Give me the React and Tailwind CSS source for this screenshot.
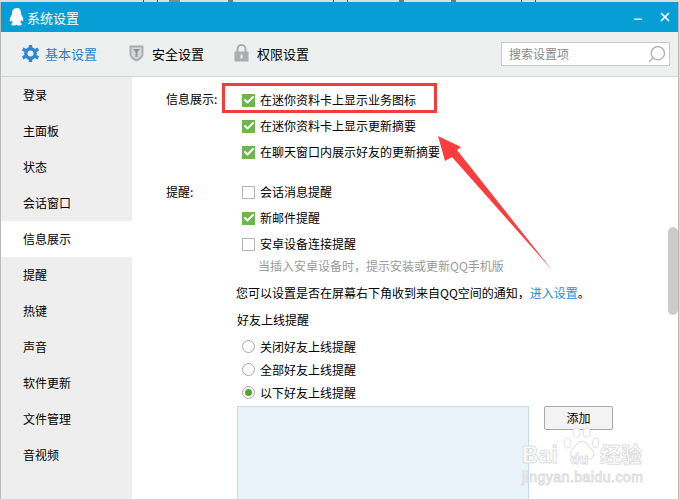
import { Check, Minus, Search, X } from "lucide-react";

const menu = ["登录", "主面板", "状态", "会话窗口", "信息展示", "提醒", "热键", "声音", "软件更新", "文件管理", "音视频"];

const CheckRow = ({ label, checked }) => (
  <div className="flex items-center h-[26px]">
    {checked ? (
      <span className="w-[13px] h-[13px] bg-[#6cb64c] flex items-center justify-center">
        <Check className="w-[12px] h-[12px] text-white" strokeWidth={4} />
      </span>
    ) : (
      <span className="w-[13px] h-[13px] bg-white border border-[#b5b5b5]"></span>
    )}
    <span className="ml-[5px]">{label}</span>
  </div>
);

const RadioRow = ({ label, checked }) => (
  <div className="flex items-center h-[23px] ml-[5px]">
    <span className="w-[13px] h-[13px] rounded-full bg-white border border-[#a8a8a8] flex items-center justify-center">
      {checked && <span className="w-[7px] h-[7px] rounded-full bg-[#52a62c]"></span>}
    </span>
    <span className="ml-[5px]">{label}</span>
  </div>
);

const QqLogo = () => (
  <svg width="15" height="18" viewBox="0 0 15 18" fill="#fff">
    <path d="M7.5 0C4.6 0 3 2.2 3 5c0 .8-.1 1.4-.4 2C1.5 9 .7 10.8.7 12.3c0 .9.3 1.3.6 1.3.4 0 .9-.5 1.3-1.2.2.9.7 1.7 1.3 2.3-1 .4-1.7.9-1.7 1.5C2.2 17 3.5 17.5 5 17.5c1.1 0 2-.3 2.5-.8.5.5 1.4.8 2.5.8 1.5 0 2.8-.5 2.8-1.6 0-.6-.7-1.1-1.7-1.5.6-.6 1.1-1.4 1.3-2.3.4.7.9 1.2 1.3 1.2.3 0 .6-.4.6-1.3 0-1.5-.8-3.3-1.9-5.3-.3-.6-.4-1.2-.4-2 0-2.8-1.6-5-4.5-5z" />
  </svg>
);

const GearIcon = () => (
  <svg width="17" height="17" viewBox="0 0 17 17">
    <circle cx="8.5" cy="8.5" r="4.7" fill="none" stroke="#2f86d0" strokeWidth="3.4" />
    <path d="M8.5 0v3M8.5 14v3M0.7 4l2.6 1.5M13.7 11.5l2.6 1.5M0.7 13l2.6-1.5M13.7 5.5l2.6-1.5" stroke="#2f86d0" strokeWidth="3.4" />
  </svg>
);

const ShieldIcon = () => (
  <svg width="15" height="17" viewBox="0 0 15 17">
    <path d="M0.5 0.5h14v8.5c0 3.5-3.5 6-7 7.5-3.5-1.5-7-4-7-7.5z" fill="#a9aeae" />
    <path d="M2.5 2.5h10v6.5c0 2.3-2.5 4.2-5 5.3-2.5-1.1-5-3-5-5.3z" fill="#d6d9d9" />
    <path d="M4 4h7l-2.5 3v5h-2V7z" fill="#8d9393" />
  </svg>
);

const LockIcon = () => (
  <svg width="15" height="18" viewBox="0 0 15 18">
    <path d="M3.5 8V5a4 4 0 0 1 8 0v3" fill="none" stroke="#a9aeae" strokeWidth="2" />
    <rect x="0.5" y="7.5" width="14" height="10" fill="#a9aeae" />
    <rect x="6.5" y="10.5" width="2" height="4" fill="#eef0f0" />
  </svg>
);

const Paw = () => (
  <svg width="40" height="40" viewBox="0 0 50 50" fill="#fff" stroke="#e4e4e4" strokeWidth="1.5">
    <ellipse cx="7" cy="20" rx="4" ry="6" />
    <ellipse cx="18" cy="7" rx="4.5" ry="6" />
    <ellipse cx="31" cy="7" rx="4.5" ry="6" />
    <ellipse cx="42" cy="20" rx="4" ry="6" />
    <path d="M25 18c-6 0-8 6-12 10-5 5-2 13 5 12 3-.5 5-1 7-1s4 .5 7 1c7 1 10-7 5-12-4-4-6-10-12-10z" />
  </svg>
);

const App = () => {
  return (
    <div className="relative w-[680px] h-[499px] overflow-hidden bg-[#dcdcdc] text-[12px] leading-none text-black font-['Noto_Sans_CJK_SC','Noto_Sans',sans-serif]">
      {/* 顶部露出的后方窗口 */}
      <div className="h-[2px] flex">
        <span className="ml-[143px] w-[15px] border-x border-[#2a4f9c]"></span>
        <span className="ml-[11px] w-[11px] bg-[#888]"></span>
        <span className="ml-[48px] w-[5px] bg-[#777]"></span>
        <span className="ml-[100px] w-[15px] border-x border-[#2a4f9c]"></span>
        <span className="ml-[51px] w-[5px] bg-[#777]"></span>
        <span className="ml-[47px] w-[5px] bg-[#777]"></span>
        <span className="ml-[65px] w-[15px] border-x border-[#2a4f9c]"></span>
      </div>
      <div className="w-[679px] h-[497px] flex flex-col border-x border-[#b9b9b9] bg-white">
        {/* 标题栏 */}
        <div className="h-[30px] shrink-0 bg-[#079ed5] flex items-center pl-[8px] pr-[6px] text-white">
          <QqLogo />
          <span className="ml-[3px] text-[13px]">系统设置</span>
          <Minus className="w-[12px] h-[12px] ml-auto mt-[4px]" strokeWidth={2.5} />
          <X className="w-[14px] h-[14px] ml-[14px]" strokeWidth={3} />
        </div>

        {/* 工具栏 */}
        <div className="h-[45px] shrink-0 bg-[#eef0f0] border-b border-[#d5d5d5] flex items-center pl-[21px] pr-[8px] text-[13px]">
          <div className="flex items-center pb-[2px]">
            <GearIcon />
            <span className="ml-[6px] text-[#2a7fc6]">基本设置</span>
            <span className="ml-[32px]"><ShieldIcon /></span>
            <span className="ml-[8px]">安全设置</span>
            <span className="ml-[30px]"><LockIcon /></span>
            <span className="ml-[8px]">权限设置</span>
          </div>
          <div className="ml-auto w-[169px] h-[24px] bg-white border border-[#c8c8c8] flex items-center pl-[7px] pr-[2px] text-[12px] text-[#888]">
            <span>搜索设置项</span>
            <Search className="w-[20px] h-[20px] ml-auto text-[#aaa] -scale-x-100" strokeWidth={1.5} />
          </div>
        </div>

        <div className="flex-1 flex min-h-0">
          {/* 左侧菜单 */}
          <div className="w-[131px] shrink-0 bg-[#eeeeee]">
            {menu.map((item) => (
              <div key={item} className={`h-[36px] flex items-center pl-[22px] ${item === "信息展示" ? "bg-white" : ""}`}>
                {item}
              </div>
            ))}
          </div>

          {/* 内容区 */}
          <div className="relative flex-1 pl-[34px] pt-[10px] overflow-hidden">
            <div className="flex">
              <div className="w-[76px] pt-[6px]">信息展示:</div>
              <div>
                <CheckRow label="在迷你资料卡上显示业务图标" checked />
                <CheckRow label="在迷你资料卡上显示更新摘要" checked />
                <CheckRow label="在聊天窗口内展示好友的更新摘要" checked />
              </div>
            </div>
            <div className="flex mt-[14px]">
              <div className="w-[76px] pt-[7px]">提醒:</div>
              <div>
                <CheckRow label="会话消息提醒" />
                <CheckRow label="新邮件提醒" checked />
                <CheckRow label="安卓设备连接提醒" />
                <div className="ml-[16px] mt-[3px] text-[#999]">当插入安卓设备时，提示安装或更新QQ手机版</div>
              </div>
            </div>
            <div className="ml-[71px] mt-[15px]">
              <div className="-ml-px">
                您可以设置是否在屏幕右下角收到来自QQ空间的通知，<span className="text-[#1a8fd8]">进入设置</span>。
              </div>
              <div className="mt-[15px]">好友上线提醒</div>
              <div className="mt-[9px]">
                <RadioRow label="关闭好友上线提醒" />
                <RadioRow label="全部好友上线提醒" />
                <RadioRow label="以下好友上线提醒" checked />
              </div>
              <div className="flex mt-[2px]">
                <div className="w-[292px] h-[120px] bg-[#eaf2fa] border border-[#c5d9ea]"></div>
                <button className="ml-[15px] w-[69px] h-[24px] bg-[#f3f3f3] border border-[#a8a8a8] rounded-[2px]">添加</button>
              </div>
            </div>
            {/* 滚动条 */}
            <div className="absolute right-0 top-[150px] w-[10px] h-[88px] rounded-full bg-[#cccccc]"></div>
          </div>
        </div>
      </div>

      {/* 红框标注 */}
      <div className="absolute left-[222px] top-[83px] w-[215px] h-[30px] border-[3px] border-[#f43c3c]"></div>

      {/* 红色箭头 */}
      <svg className="absolute left-0 top-0" width="680" height="499">
        <polygon points="438,136 461,147 457,150 552,270 452,157 445,161" fill="#fb3d3d" />
      </svg>

      {/* 百度经验水印 */}
      <div className="absolute left-[520px] top-[425px] w-[130px] h-[70px] text-white [-webkit-text-stroke:1px_#dedede]">
        <div className="absolute left-[42px] top-[2px]"><Paw /></div>
        <div className="absolute left-[2px] top-[19px] font-['Liberation_Sans',sans-serif] font-bold text-[23px]">Bai</div>
        <div className="absolute left-[50px] top-[26px] font-['Liberation_Sans',sans-serif] font-bold text-[15px]">du</div>
        <div className="absolute left-[80px] top-[18px] text-[21px] font-bold font-['Noto_Sans_CJK_SC',sans-serif]">经验</div>
        <div className="absolute left-[2px] top-[45px] text-[14px] tracking-[0.5px] font-['Liberation_Sans',sans-serif]">jingyan.baidu.com</div>
      </div>
    </div>
  );
};

export default App;
